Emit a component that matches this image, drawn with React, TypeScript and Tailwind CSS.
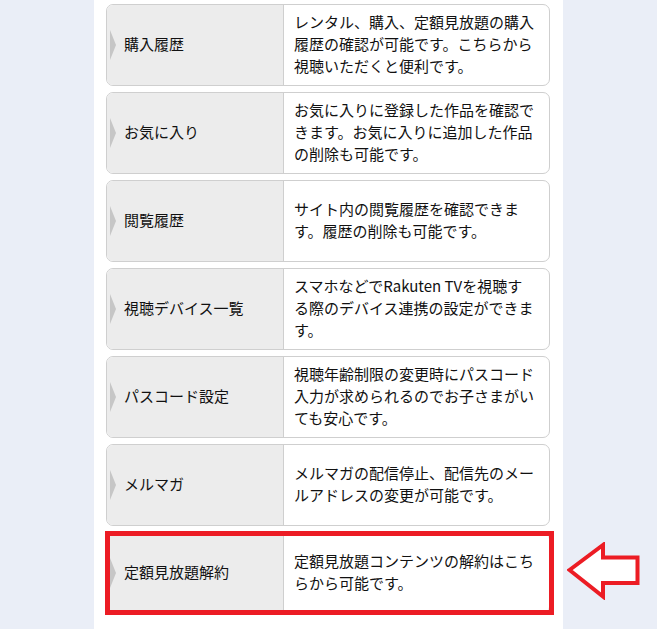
import React from "react";

type Item = { label: string; lines: string[] };

const items: Item[] = [
  { label: "購入履歴", lines: ["レンタル、購入、定額見放題の購入", "履歴の確認が可能です。こちらから", "視聴いただくと便利です。"] },
  { label: "お気に入り", lines: ["お気に入りに登録した作品を確認で", "きます。お気に入りに追加した作品", "の削除も可能です。"] },
  { label: "閲覧履歴", lines: ["サイト内の閲覧履歴を確認できま", "す。履歴の削除も可能です。"] },
  { label: "視聴デバイス一覧", lines: ["スマホなどでRakuten TVを視聴す", "る際のデバイス連携の設定ができま", "す。"] },
  { label: "パスコード設定", lines: ["視聴年齢制限の変更時にパスコード", "入力が求められるのでお子さまがい", "ても安心です。"] },
  { label: "メルマガ", lines: ["メルマガの配信停止、配信先のメー", "ルアドレスの変更が可能です。"] },
  { label: "定額見放題解約", lines: ["定額見放題コンテンツの解約はこち", "らから可能です。"] },
];

function Card({ item }: { item: Item }) {
  return (
    <div className="flex h-[82px] rounded-[7px] border border-[#cfcfcf] overflow-hidden bg-white">
      <div className="relative flex w-[177px] shrink-0 items-center border-r border-[#cfcfcf] bg-[#ececec] pl-[17px] pb-[3px]">
        <span className="absolute left-[3px] top-1/2 -translate-y-1/2 h-0 w-0 border-y-[15px] border-l-[6px] border-y-transparent border-l-[#c6c6c6]" />
        <span className="text-[15px] leading-[22px] text-[#111] whitespace-nowrap">{item.label}</span>
      </div>
      <div className="flex flex-1 flex-col justify-center pl-[10px] pr-[8px] pb-[2px]">
        {item.lines.map((l, i) => (
          <div key={i} className="text-[15px] leading-[22px] text-[#111] whitespace-nowrap">
            {l}
          </div>
        ))}
      </div>
    </div>
  );
}

export default function App() {
  return (
    <div
      className="min-h-screen w-full bg-[#eaeef7]"
      style={{ fontFamily: '"Noto Sans CJK JP", "Noto Sans", sans-serif' }}
    >
      <div className="relative mx-auto w-[469px] min-h-[629px] bg-white px-[12px] pt-[4px] pb-[12px]">
        <div className="flex flex-col gap-[6px] w-[444px]">
          {items.map((it, idx) =>
            idx === items.length - 1 ? (
              <div key={idx} className="relative">
                <Card item={it} />
                <div className="pointer-events-none absolute -left-[1px] -right-[4px] -top-[1px] -bottom-[1px] border-[5px] border-[#ec1c24]" />
              </div>
            ) : (
              <Card key={idx} item={it} />
            )
          )}
        </div>
        <svg
          className="absolute left-[473px] top-[542px]"
          width="74"
          height="58"
          viewBox="0 0 74 58"
        >
          <path
            d="M2.5 28 L36 3 L36 15.5 L70.5 15.5 L70.5 41 L36 41 L36 54.5 Z"
            fill="#ffffff"
            stroke="#ec1c24"
            strokeWidth="4"
            strokeLinejoin="miter"
          />
        </svg>
      </div>
    </div>
  );
}
